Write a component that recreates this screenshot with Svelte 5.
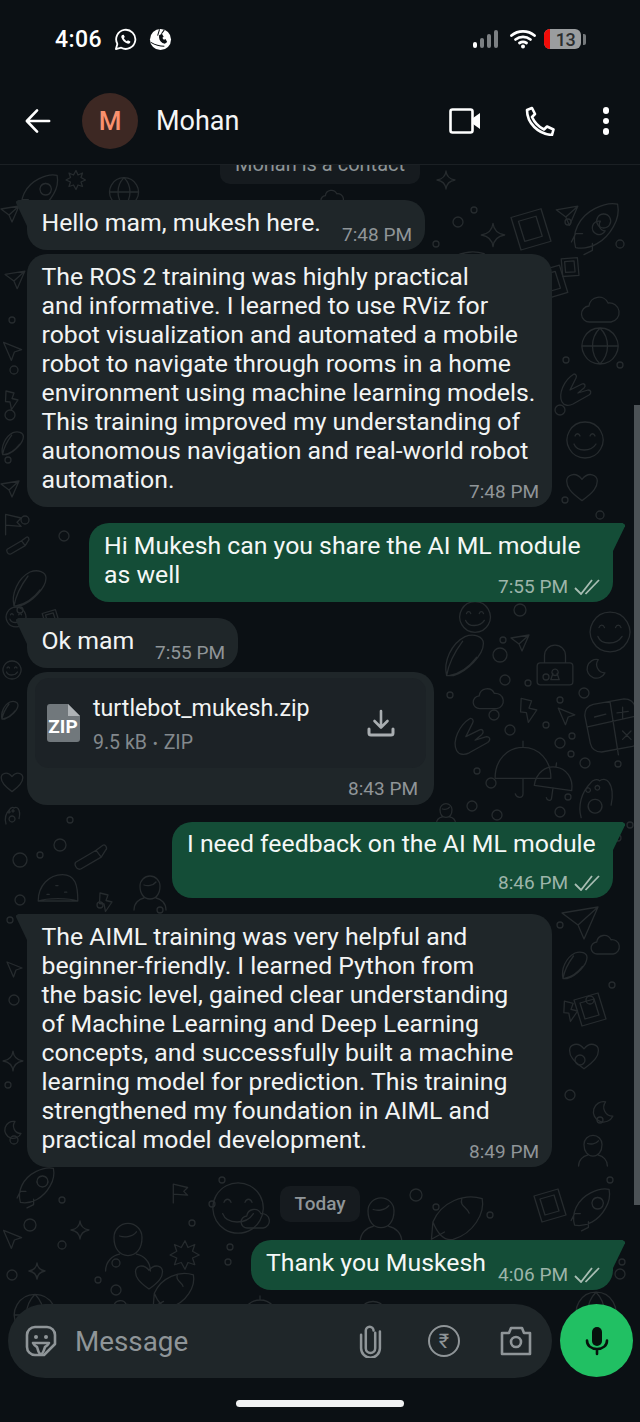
<script lang="ts">
  /** WhatsApp-style dark chat screen with doodle wallpaper. */

  const doodles: Record<string, string> = {
    rocket: 'M4 34c-3-10 2-22 14-28 6-3 12-4 16-3 1 5 0 11-3 16-6 11-17 17-27 15zM24 10a5 5 0 1 0 .1 0M9 24l-5 0-3 6M16 31l0 5-6 3',
    star: 'M20 2c1 10 6 16 18 18-12 2-17 8-18 18-1-10-6-16-18-18 12-2 17-8 18-18z',
    plane: 'M2 8l36-6-14 32-6-14zM18 20l20-18',
    lock: 'M10 18v-7a10 10 0 0 1 20 0v7M6 18h28a3 3 0 0 1 3 3v15a3 3 0 0 1-3 3H6a3 3 0 0 1-3-3V21a3 3 0 0 1 3-3zM20 24a3 3 0 1 0 .1 0M18 28l-2 6h8l-2-6',
    moon: 'M26 3a17 17 0 1 0 12 24 15 15 0 0 1-12-24z',
    cloud: 'M10 32a8 8 0 0 1-1-16 10 10 0 0 1 19-3 9 9 0 0 1 3 19z',
    bolt: 'M8 2l16 4-4 11 12 3-13 19-3-15-9-1z',
    arrow: 'M6 4l30 12-12 4-5 14z',
    calc: 'M8 6l22-4c4 0 7 2 8 6l4 20c0 4-2 7-6 8l-22 4c-4 0-7-2-8-6L2 14c0-4 2-7 6-8zM20 4l6 38M4 22l36-8M9 15l8-2M29 8v8M25 12l8-1M29 25l6 6M35 25l-6 6',
    hand: 'M4 30c-4-8 2-22 12-28 2 0 3 2 2 4l-6 12 12-6c3-1 4 2 2 4l-6 5 10-3c3 0 4 3 1 5l-16 9c-4 2-9 2-11-2z',
    corn: 'M4 38c-3-12 4-28 16-34 8-3 16 0 16 6 0 10-14 24-26 28zM4 38c2-12 8-22 14-30M6 38c10-2 18-8 24-16',
    smile: 'M20 2a18 18 0 1 0 .1 0M10 16c1-3 4-3 5 0M25 16c1-3 4-3 5 0M9 24c3 8 17 8 22 0',
    umbrella: 'M2 26c0-12 8-20 18-20s18 8 18 20zM20 6V2M20 26v10c0 3-4 3-5 0',
    paw: 'M8 38c-3-10 0-22 8-30 2-3 6-4 8-2 2-2 6-2 8 1 3 4 4 12 2 20M20 22a6 6 0 1 0 .1 0M14 12a2 2 0 1 0 .1 0M22 10a2 2 0 1 0 .1 0',
    photo: 'M4 10l24-7 8 26-24 7zM10 13l14-4 5 16-14 4z',
    fish: 'M2 22C8 8 24 2 36 6c2 10-6 24-20 28-5 1-10-2-14-12zM22 6c-2 5 4 6 5 10M2 22l-1 12 9-5',
    flag: 'M6 38V4l26 6-7 7 7 7-26-2',
    heart: 'M20 36C6 26 2 20 2 13 2 6 12 1 20 11 28 1 38 6 38 13c0 7-4 13-18 23z',
    globe: 'M20 2a18 18 0 1 0 .1 0M2 20h36M20 2c-10 10-10 26 0 36M20 2c10 10 10 26 0 36',
    taco: 'M2 30C2 16 12 6 24 6s14 10 14 24zM10 24l2 0M18 16l2 0M26 22l2 0M2 30c8-3 28-3 36 0',
    person: 'M10 16a10 10 0 1 1 20 0c0 8-4 13-10 13s-10-5-10-13zM4 40c0-7 5-11 10-12M36 40c0-7-5-11-10-12M14 15c3 1 9 1 12-3',
    burst: 'M20 1l4 9 9-4-3 9 9 5-9 4 3 9-9-3-4 9-5-9-9 3 3-9-9-4 9-5-3-9 9 4z',
    tube: 'M2 32l24-14 6 8-24 14c-3 1-5-1-6-3-1-2-1-4 0-5zM26 18l8-6c3-2 6 4 3 6l-5 8'
  };

  // [type, x, y, size, rotation], placed by hand against the reference wallpaper
  const placed: [string, number, number, number, number][] = [
    ['rocket', 18, 172, 46, 0], ['burst', 66, 170, 20, 0], ['globe', 108, 176, 32, 0], ['flag', 168, 222, 24, 0],
    ['plane', 0, 205, 20, 0], ['photo', 506, 205, 50, 0], ['star', 480, 222, 26, 0], ['plane', 555, 205, 24, 0],
    ['rocket', 570, 200, 56, 0], ['fish', 432, 245, 58, 0], ['photo', 530, 262, 42, 0], ['photo', 560, 252, 26, 12],
    ['plane', 4, 270, 22, 0], ['cloud', 580, 290, 40, 0], ['globe', 580, 326, 40, 0], ['moon', 590, 220, 16, 0],
    ['hand', 558, 372, 40, 0], ['smile', 565, 420, 40, 0], ['heart', 565, 470, 34, 0], ['corn', 0, 430, 26, 0],
    ['arrow', 0, 340, 24, 0], ['flag', 2, 512, 24, 0], ['tube', 6, 530, 24, 0],
    ['corn', 10, 568, 40, 0], ['smile', 5, 606, 22, 0], ['photo', 40, 608, 22, 0],
    ['smile', 588, 610, 44, 0], ['plane', 510, 634, 20, 0], ['lock', 534, 644, 42, 0], ['moon', 584, 658, 22, 0],
    ['corn', 442, 632, 46, 0], ['cloud', 472, 683, 32, 0], ['smile', 458, 600, 34, 0],
    ['bolt', 516, 697, 26, 0], ['arrow', 555, 706, 22, 0], ['calc', 582, 696, 56, 0], ['hand', 452, 716, 46, 0],
    ['umbrella', 492, 738, 62, 0], ['umbrella', 536, 758, 42, 8], ['paw', 572, 774, 46, 0],
    ['smile', 2, 660, 20, 0], ['corn', 0, 700, 20, 0], ['heart', 0, 770, 24, 0], ['person', 130, 870, 40, 0],
    ['tube', 74, 835, 34, 0], ['taco', 36, 868, 44, 0], ['bolt', 96, 892, 20, 0],
    ['person', 434, 800, 24, 0], ['paw', 2, 805, 20, 0], ['plane', 560, 905, 40, 0],
    ['corn', 560, 950, 30, 0], ['photo', 570, 990, 40, 0], ['heart', 568, 1040, 32, 0], ['moon', 590, 1100, 24, 0],
    ['person', 575, 1130, 36, 0], ['rocket', 16, 1165, 44, 0], ['smile', 210, 1180, 56, 0], ['flag', 170, 1182, 22, 0],
    ['person', 100, 1215, 56, 0], ['person', 355, 1190, 52, 0], ['fish', 430, 1190, 58, 0], ['photo', 530, 1186, 40, 0],
    ['rocket', 570, 1186, 46, 0], ['photo', 530, 1240, 42, 0], ['arrow', 0, 1228, 24, 0], ['burst', 170, 1240, 30, 0],
    ['star', 28, 1262, 18, 0], ['globe', 12, 1292, 46, 0], ['heart', 134, 1262, 30, 0], ['fish', 152, 1268, 46, 0],
    ['smile', 358, 1300, 30, 0], ['umbrella', 240, 1294, 40, 0], ['globe', 574, 1290, 44, 0], ['cloud', 108, 1296, 26, 0],
    ['star', 436, 170, 20, 0], ['cloud', 320, 186, 24, 0], ['plane', 0, 480, 20, 0], ['bolt', 2, 390, 20, 0],
    ['bolt', 560, 1000, 22, 0], ['cloud', 590, 930, 30, 0], ['arrow', 4, 960, 20, 0], ['star', 2, 1050, 22, 0],
    ['moon', 2, 1120, 20, 0], ['cloud', 240, 1204, 30, 0], ['star', 70, 1220, 20, 0]
  ];

  // small loose circles between the doodles
  const dots: [number, number, number][] = [
    [142, 213, 4], [166, 211, 3], [105, 222, 3], [458, 222, 5], [474, 210, 3], [436, 244, 3], [568, 222, 3], [620, 244, 4],
    [500, 268, 3], [515, 275, 4], [25, 520, 4], [64, 536, 5], [20, 610, 3], [576, 530, 3], [520, 610, 6], [503, 640, 3],
    [500, 655, 7], [505, 680, 5], [528, 683, 3], [450, 695, 3], [494, 715, 5], [510, 730, 5], [546, 677, 3], [584, 693, 5],
    [560, 700, 3], [546, 725, 3], [572, 736, 3], [560, 743, 5], [571, 754, 3], [585, 763, 5], [618, 764, 3], [477, 771, 3],
    [491, 783, 5], [472, 806, 5], [497, 815, 5], [560, 812, 5], [568, 797, 3], [630, 825, 3], [618, 838, 3], [60, 845, 6],
    [40, 855, 3], [20, 860, 7], [160, 910, 3], [20, 900, 5], [100, 905, 3], [70, 820, 3], [594, 880, 3], [590, 1000, 4],
    [580, 1060, 5], [600, 1120, 3], [610, 1180, 3], [30, 1225, 6], [62, 1200, 3], [12, 1275, 5], [62, 1245, 4],
    [116, 1263, 4], [116, 1290, 5], [96, 1312, 3], [212, 1204, 3], [230, 1247, 3], [192, 1223, 3], [222, 1180, 3],
    [416, 1195, 6], [436, 1207, 3], [490, 1215, 3], [620, 1274, 5], [622, 1262, 3], [228, 1262, 3], [98, 1280, 3],
    [12, 320, 3], [14, 370, 4], [10, 415, 5], [8, 460, 3], [566, 360, 3], [560, 410, 5], [620, 365, 3], [565, 500, 3],
    [600, 515, 4], [10, 920, 3], [14, 1000, 5], [8, 1085, 3], [14, 1140, 4], [560, 925, 3], [612, 985, 3], [570, 1095, 5]
  ];

  type Msg = { kind: 'in' | 'out'; lines: string[]; time: string; cls?: string };

  const first: Msg[] = [
    { kind: 'in', lines: ['Hello mam, mukesh here.'], time: '7:48 PM', cls: 'tail gap-s w398' },
    {
      kind: 'in',
      lines: [
        'The ROS 2 training was highly practical',
        'and informative. I learned to use RViz for',
        'robot visualization and automated a mobile',
        'robot to navigate through rooms in a home',
        'environment using machine learning models.',
        'This training improved my understanding of',
        'autonomous navigation and real-world robot',
        'automation.'
      ],
      time: '7:48 PM',
      cls: 'w525 gap-l'
    },
    {
      kind: 'out',
      lines: ['Hi Mukesh can you share the AI ML module', 'as well'],
      time: '7:55 PM',
      cls: 'w524 gap-l'
    },
    { kind: 'in', lines: ['Ok mam'], time: '7:55 PM', cls: 'tail w211 gap-s' }
  ];

  const second: Msg[] = [
    { kind: 'out', lines: ['I need feedback on the AI ML module'], time: '8:46 PM', cls: 'w441 gap-l stacked' },
    {
      kind: 'in',
      lines: [
        'The AIML training was very helpful and',
        'beginner-friendly. I learned Python from',
        'the basic level, gained clear understanding',
        'of Machine Learning and Deep Learning',
        'concepts, and successfully built a machine',
        'learning model for prediction. This training',
        'strengthened my foundation in AIML and',
        'practical model development.'
      ],
      time: '8:49 PM',
      cls: 'tail w525 big'
    }
  ];
</script>

{#snippet ticks()}
  <svg class="ticks" viewBox="0 0 26 16" width="26" height="16" fill="none" stroke="#a8bdb3" stroke-width="1.8">
    <path d="M1 9l6 6L18 1" />
    <path d="M11.500 15L25 1" />
  </svg>
{/snippet}

{#snippet bubble(m: Msg)}
  <div class="bubble {m.kind} {m.cls ?? ''}">
    <div class="text">
      {#each m.lines as line}
        <div>{line}</div>
      {/each}
    </div>
    <div class="meta">
      <span>{m.time}</span>
      {#if m.kind === 'out'}{@render ticks()}{/if}
    </div>
  </div>
{/snippet}

<div class="phone">
  <header class="top">
    <div class="status">
      <div class="status-left">
        <span class="clock">4:06</span>
        <svg viewBox="0 0 24 24" width="23" height="23" fill="none" stroke="#fff" stroke-width="1.9">
          <path d="M2 22l1.500-5.400A10 10 0 1 1 7.500 20.600z" stroke-linejoin="round" />
          <path d="M8.600 7.200c-.9.600-1.200 1.800-.8 3 .9 2.700 3.200 5 6 6 1.200.4 2.400 0 3-.9l.3-1.300-2.600-1.300-1 1.100c-1.300-.5-2.800-2-3.300-3.300l1.100-1-1.200-2.500z" fill="#fff" stroke="none" />
        </svg>
        <svg viewBox="0 0 24 24" width="23" height="23">
          <circle cx="12" cy="12" r="11" fill="#fff" />
          <path d="M11 1.500L9 8M16 2l-3 4M2 15c5 3 10 4 14 4" fill="none" stroke="#0b1014" stroke-width="1.100" />
          <path d="M10.500 7.500l3-1.500 1.800 3-1.300 1.300c.3 1 .8 1.600 1.700 2l1.500-.8 1.800 3-2.500 2c-3.500-.8-5.800-3.200-6-6.500z" fill="#0b1014" />
        </svg>
      </div>
      <div class="status-right">
        <svg viewBox="0 0 30 20" width="30" height="20">
          <rect x="1" y="13" width="4" height="6" rx="2" fill="#fff" />
          <rect x="8" y="9" width="4" height="10" rx="2" fill="#7c8083" />
          <rect x="15" y="5" width="4" height="14" rx="2" fill="#7c8083" />
          <rect x="22" y="1" width="4" height="18" rx="2" fill="#7c8083" />
        </svg>
        <svg viewBox="0 0 26 20" width="26" height="20" fill="none" stroke="#fff" stroke-width="2.800" stroke-linecap="round">
          <path d="M1.500 6.500c6.500-5.500 16.500-5.500 23 0" />
          <path d="M5.500 10.500c4.500-3.500 10.500-3.500 15 0" />
          <path d="M9.500 14c2-1.300 5-1.300 7 0" />
          <circle cx="13" cy="17.500" r="2" fill="#fff" stroke="none" />
        </svg>
        <div class="battery">
          <div class="battery-body"><span class="battery-red"></span><span class="battery-num">13</span></div>
          <span class="battery-cap"></span>
        </div>
      </div>
    </div>
    <div class="bar">
      <svg class="back" viewBox="0 0 28 28" width="26" height="26" fill="none" stroke="#fff" stroke-width="2.800" stroke-linecap="round" stroke-linejoin="round">
        <path d="M26 14H2.500M13 2.500L2 14l11 11.500" />
      </svg>
      <div class="avatar">M</div>
      <div class="name">Mohan</div>
      <svg class="video" viewBox="0 0 32 26" width="32" height="26" fill="none" stroke="#fff" stroke-width="2.600" stroke-linejoin="round">
        <rect x="1.500" y="1.500" width="22" height="23" rx="2" />
        <path d="M24 10l7-5v16l-7-5z" fill="#fff" stroke="none" />
      </svg>
      <svg class="call" viewBox="0 0 30 30" width="30" height="30" fill="none" stroke="#fff" stroke-width="2.600" stroke-linejoin="round">
        <path d="M7 2L2 4c0 13 11 24 25 25l1.500-5.500-6.500-3-3 3C13 20.500 9.500 16.500 7 11l3-3z" />
      </svg>
      <div class="dots"><i></i><i></i><i></i></div>
    </div>
  </header>

  <main class="chat">
    <svg class="wallpaper" width="640" height="1221" viewBox="0 165 640 1221" fill="none" stroke="#262b2e" stroke-width="1.300" stroke-linejoin="round" stroke-linecap="round">
      {#each placed as [type, x, y, size, rot]}
        <g transform="translate({x} {y}) rotate({rot}) scale({size / 40})">
          <path d={doodles[type]} vector-effect="non-scaling-stroke" />
        </g>
      {/each}
      {#each dots as [cx, cy, r]}
        <circle {cx} {cy} {r} />
      {/each}
    </svg>
    <div class="scrollbar"></div>

    <div class="messages">
      <div class="notice">Mohan is a contact</div>
      {#each first as m}
        {@render bubble(m)}
      {/each}

      <div class="bubble in file w407">
        <div class="file-card">
          <svg class="zip" viewBox="0 0 33 38" width="33" height="38">
            <path d="M3 0h18l12 12v23a3 3 0 0 1-3 3H3a3 3 0 0 1-3-3V3a3 3 0 0 1 3-3z" fill="#71787c" />
            <path d="M21 0l12 12H21z" fill="#aeb3b6" />
            <text x="16" y="29" text-anchor="middle">ZIP</text>
          </svg>
          <div class="file-info">
            <div class="file-name">turtlebot_mukesh.zip</div>
            <div class="file-meta">9.5 kB <span class="sep">•</span> ZIP</div>
          </div>
          <svg class="download" viewBox="0 0 28 28" width="28" height="28" fill="none" stroke="#a9aeb1" stroke-width="3" stroke-linecap="round" stroke-linejoin="round">
            <path d="M14 2v16M7.500 12l6.500 6.500L20.500 12" stroke-width="2.600" />
            <path d="M2 20v4a2 2 0 0 0 2 2h20a2 2 0 0 0 2-2v-4" />
          </svg>
        </div>
        <div class="meta"><span>8:43 PM</span></div>
      </div>

      {#each second as m}
        {@render bubble(m)}
      {/each}

      <div class="day">Today</div>

      {@render bubble({ kind: 'out', lines: ['Thank you Muskesh'], time: '4:06 PM', cls: 'w362 last' })}
    </div>

    <div class="composer">
      <div class="input">
        <svg class="sticker" viewBox="0 0 32 32" width="32" height="32" fill="none" stroke="#8f9598" stroke-width="2.600" stroke-linejoin="round">
          <path d="M10 2h12a8 8 0 0 1 8 8v9L19 30h-9a8 8 0 0 1-8-8V10a8 8 0 0 1 8-8z" />
          <path d="M8 18h16c-1 2-2 3-4 4-1 3-2 7-4 7-3 0-3-5-4-7-2-1-3-2-4-4z" />
          <circle cx="11" cy="12" r="2" fill="#8f9598" stroke="none" />
          <circle cx="21" cy="12" r="2" fill="#8f9598" stroke="none" />
        </svg>
        <span class="placeholder">Message</span>
        <svg class="clip" viewBox="0 0 22 32" width="23" height="34" fill="none" stroke="#8f9598" stroke-width="2.400" stroke-linecap="round">
          <path d="M15.500 8v15a4.500 4.500 0 0 1-9 0V6a3.700 3.700 0 0 1 7.400 0" />
          <path d="M2 10v13a9 9 0 0 0 18 0V7" />
        </svg>
        <div class="rupee">₹</div>
        <svg class="camera" viewBox="0 0 32 30" width="32" height="30" fill="none" stroke="#8f9598" stroke-width="2.600" stroke-linejoin="round">
          <path d="M2 7h7l2-5h11l2 5h6v21H2z" />
          <circle cx="16" cy="16" r="5" />
        </svg>
      </div>
      <div class="mic">
        <svg viewBox="0 0 24 30" width="24" height="30" fill="none" stroke="#06120c" stroke-width="2.600" stroke-linecap="round">
          <rect x="7" y="1" width="10" height="19" rx="5" fill="#06120c" stroke="none" />
          <path d="M2 14.500c0 5 4 8.500 10 8.500s10-3.500 10-8.500M12 23v5" />
        </svg>
      </div>
    </div>
  </main>

  <footer class="nav"><span class="home"></span></footer>
</div>

<style>
  :global(body) {
    margin: 0;
    background: #0b1014;
  }

  .phone {
    width: 640px;
    height: 1422px;
    display: flex;
    flex-direction: column;
    overflow: hidden;
    background: #0b1014;
    color: #fff;
    font-family: Roboto, 'Liberation Sans', sans-serif;
  }

  .top {
    height: 165px;
    flex-shrink: 0;
    box-sizing: border-box;
    border-bottom: 1px solid #1b2024;
    display: flex;
    flex-direction: column;
  }

  .status {
    height: 78px;
    box-sizing: border-box;
    padding: 0 54px 0 55px;
    display: flex;
    justify-content: space-between;
    align-items: center;
  }

  .status-left {
    display: flex;
    align-items: center;
    gap: 12px;
  }

  .clock {
    font-size: 23px;
    font-weight: 500;
    letter-spacing: 0.4px;
  }

  .status-right {
    display: flex;
    align-items: center;
    gap: 8px;
  }

  .battery {
    display: flex;
    align-items: center;
    gap: 2px;
  }

  .battery-body {
    width: 37px;
    height: 20px;
    border-radius: 6px;
    overflow: hidden;
    background: #9a9d9f;
    display: flex;
    align-items: center;
  }

  .battery-red {
    width: 6px;
    height: 100%;
    background: #f10c08;
  }

  .battery-num {
    flex: 1;
    text-align: center;
    color: #2b2d2e;
    font-size: 18px;
    font-weight: 500;
    letter-spacing: -0.5px;
  }

  .battery-cap {
    width: 3px;
    height: 11px;
    border-radius: 0 2px 2px 0;
    background: #75797b;
  }

  .bar {
    flex: 1;
    display: flex;
    align-items: center;
    padding: 0 30px 0 25px;
  }

  .avatar {
    width: 56px;
    height: 56px;
    margin-left: 31px;
    border-radius: 50%;
    background: #3d2823;
    color: #f9916e;
    font-size: 26px;
    font-weight: 500;
    display: flex;
    align-items: center;
    justify-content: center;
  }

  .name {
    margin-left: 18px;
    flex: 1;
    font-size: 27px;
    color: #f4f6f6;
  }

  .call {
    margin-left: 44px;
  }

  .dots {
    margin-left: 47px;
    width: 8px;
    display: flex;
    flex-direction: column;
    gap: 4px;
  }

  .dots i {
    width: 6.500px;
    height: 6.500px;
    border-radius: 50%;
    background: #fff;
    margin: 0 auto;
  }

  .chat {
    position: relative;
    flex: 1;
    min-height: 0;
    overflow: hidden;
    display: flex;
    flex-direction: column;
    justify-content: flex-end;
    background: #0b1014;
  }

  .wallpaper {
    position: absolute;
    left: 0;
    top: 0;
  }

  .scrollbar {
    position: absolute;
    right: 0;
    top: 240px;
    width: 6px;
    height: 800px;
    background: #4c5256;
  }

  .messages {
    position: relative;
    display: flex;
    flex-direction: column;
    align-items: flex-start;
    padding: 0 27px;
  }

  .notice {
    align-self: center;
    width: 200px;
    height: 38px;
    margin-bottom: 16px;
    box-sizing: border-box;
    padding-top: 6px;
    border-radius: 10px;
    background: #161b1f;
    color: #8d9496;
    font-size: 20px;
    text-align: center;
  }

  .bubble {
    position: relative;
    box-sizing: border-box;
    padding: 8px 14px 13px 15px;
    border-radius: 20px;
    font-size: 24.800px;
    line-height: 29px;
    white-space: nowrap;
  }

  .in {
    background: #1f2629;
    color: #f2f4f4;
    padding-left: 14.500px;
  }

  .out {
    align-self: flex-end;
    background: #144d37;
    color: #f4f8f6;
    border-top-right-radius: 0;
  }

  .out::after {
    content: '';
    position: absolute;
    top: 0;
    right: -12px;
    width: 12px;
    height: 28px;
    background: #144d37;
    clip-path: polygon(0 0, 80% 0, 100% 6%, 100% 12%, 0 100%);
  }

  .tail {
    border-top-left-radius: 0;
  }

  .tail::before {
    content: '';
    position: absolute;
    top: 0;
    left: -11px;
    width: 11px;
    height: 26px;
    background: #1f2629;
    clip-path: polygon(100% 0, 20% 0, 0 6%, 0 12%, 100% 100%);
  }

  .w398 { width: 398px; }
  .w525 { width: 525px; }
  .w524 { width: 524px; }
  .w211 { width: 211px; }
  .w407 { width: 407px; }
  .w441 { width: 441px; }
  .w362 { width: 362px; }

  .gap-s { margin-bottom: 4px; }
  .gap-l { margin-bottom: 16px; }

  .stacked {
    height: 76px;
    padding-top: 7px;
  }

  .big {
    margin-bottom: 19px;
  }

  .last {
    height: 50px;
    margin-bottom: 14px;
  }

  .meta {
    position: absolute;
    right: 13px;
    bottom: 2px;
    display: flex;
    align-items: center;
    gap: 6px;
    font-size: 19px;
    line-height: 26px;
    color: #8f9598;
  }

  .out .meta {
    color: #9db5aa;
  }

  .file {
    height: 133px;
    padding: 6px 8px;
    margin-bottom: 17px;
  }

  .file .meta {
    right: 16px;
    bottom: 3px;
  }

  .file-card {
    height: 90px;
    box-sizing: border-box;
    padding: 0 31px 0 12px;
    border-radius: 14px;
    background: #1c2226;
    display: flex;
    align-items: center;
  }

  .zip text {
    fill: #fff;
    font-size: 19px;
    font-weight: 700;
    font-family: Roboto, sans-serif;
  }

  .file-info {
    flex: 1;
    margin-left: 13px;
    padding-top: 2px;
  }

  .file-name {
    font-size: 23.200px;
    line-height: 30px;
  }

  .file-meta {
    margin-top: 8px;
    font-size: 19.500px;
    line-height: 24px;
    color: #83898d;
  }

  .sep {
    margin: 0 1px;
    font-size: 15px;
  }

  .day {
    align-self: center;
    width: 80px;
    height: 36px;
    margin-bottom: 18px;
    border-radius: 10px;
    background: #161b1f;
    color: #8f9598;
    font-size: 19px;
    font-weight: 500;
    line-height: 36px;
    text-align: center;
  }

  .composer {
    position: relative;
    height: 82px;
    box-sizing: border-box;
    padding: 0 7px 8px 8px;
    display: flex;
    gap: 8px;
  }

  .input {
    width: 544px;
    height: 74px;
    box-sizing: border-box;
    padding: 0 20px 0 17px;
    border-radius: 37px;
    background: #1f2629;
    display: flex;
    align-items: center;
  }

  .placeholder {
    margin-left: 18px;
    flex: 1;
    color: #8f9598;
    font-size: 27.800px;
  }

  .rupee {
    width: 28px;
    height: 28px;
    margin-left: 46px;
    border: 2.600px solid #8f9598;
    border-radius: 50%;
    color: #8f9598;
    font-size: 20px;
    line-height: 28px;
    text-align: center;
  }

  .camera {
    margin-left: 40px;
  }

  .mic {
    width: 73px;
    height: 73px;
    border-radius: 50%;
    background: #21c063;
    display: flex;
    align-items: center;
    justify-content: center;
  }

  .nav {
    height: 36px;
    flex-shrink: 0;
    display: flex;
    justify-content: center;
    padding-top: 14px;
    box-sizing: border-box;
  }

  .home {
    width: 168px;
    height: 7px;
    border-radius: 4px;
    background: #f1f2f2;
  }
</style>
